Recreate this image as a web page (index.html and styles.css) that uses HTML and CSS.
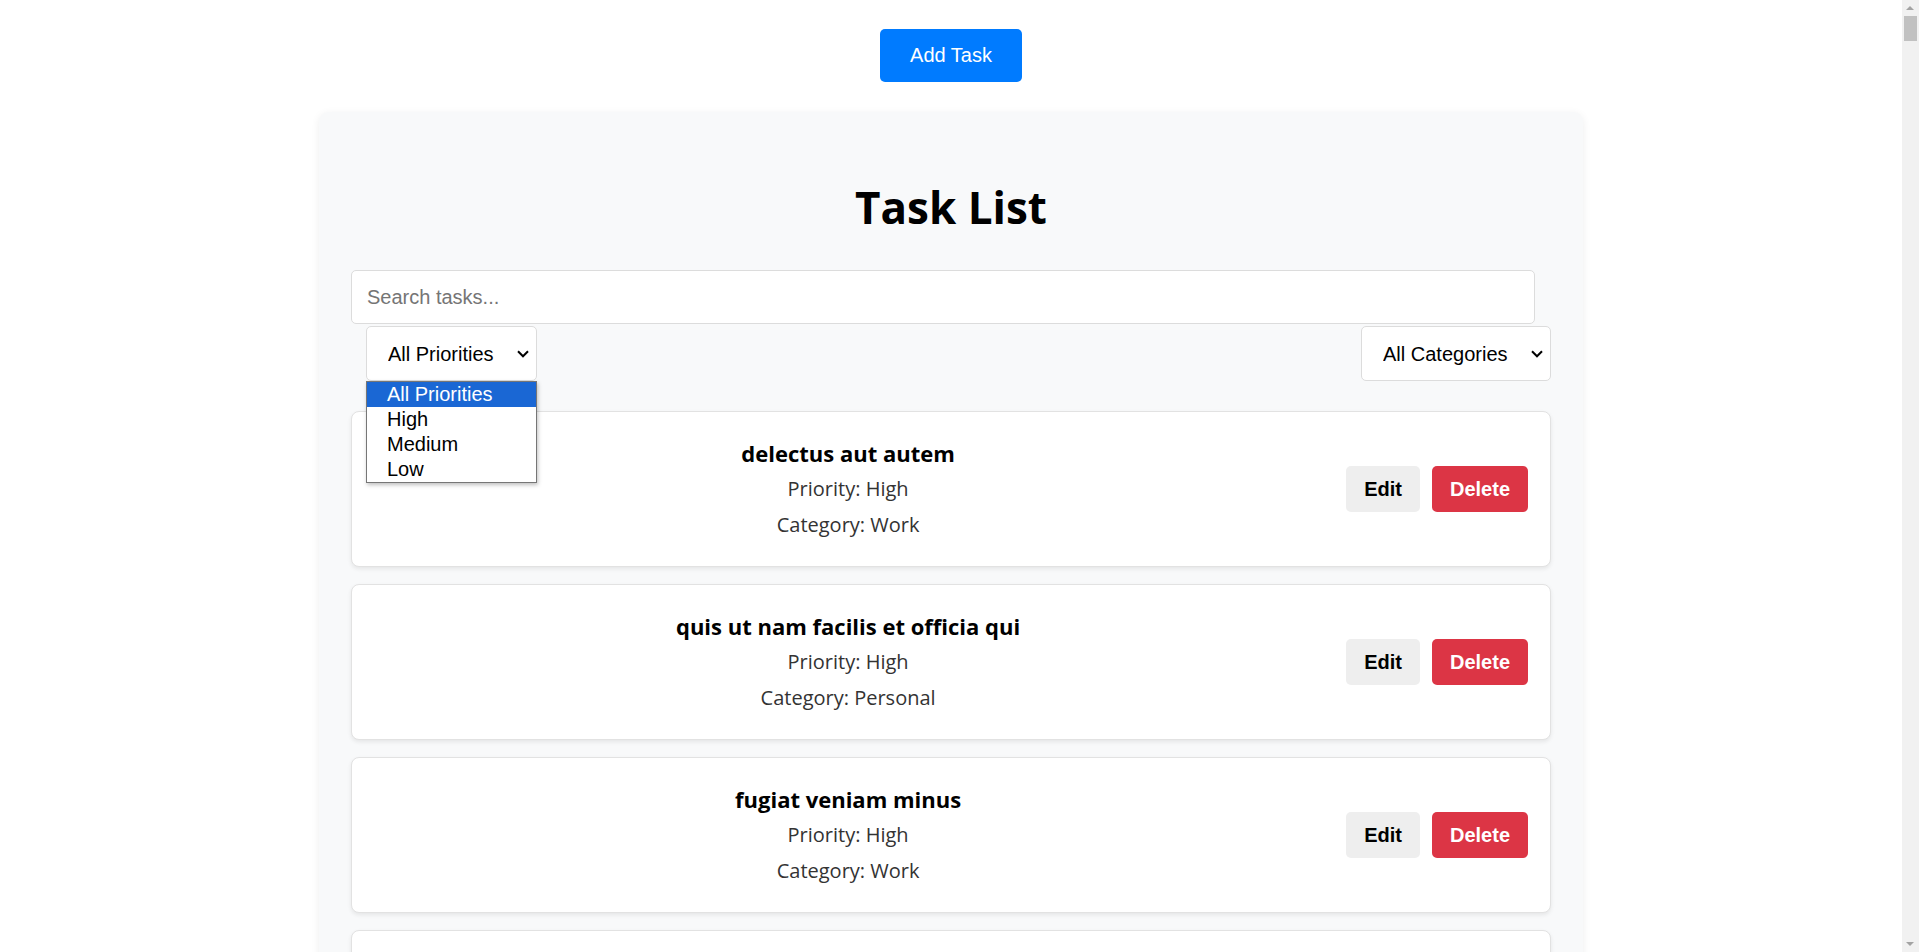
FILE: index.html
```html
<!DOCTYPE html>
<html lang="en">
<head>
<meta charset="utf-8">
<title>Task List</title>
<link rel="stylesheet" href="styles.css">
</head>
<body>
<div class="toolbar">
  <button class="btn-add" type="button">Add Task</button>
</div>
<main class="panel">
  <h1 class="title">Task List</h1>
  <input class="search" type="text" placeholder="Search tasks...">
  <div class="filters">
    <div class="select-wrap priority">
      <select class="filter-select">
        <option>All Priorities</option>
        <option>High</option>
        <option>Medium</option>
        <option>Low</option>
      </select>
      <svg class="chevron" width="12" height="8" viewBox="0 0 12 8"><path d="M1 1.3 L6 6.3 L11 1.3" fill="none" stroke="#000" stroke-width="2"/></svg>
      <ul class="dropdown">
        <li class="opt selected">All Priorities</li>
        <li class="opt">High</li>
        <li class="opt">Medium</li>
        <li class="opt">Low</li>
      </ul>
    </div>
    <div class="select-wrap">
      <select class="filter-select">
        <option>All Categories</option>
        <option>Work</option>
        <option>Personal</option>
      </select>
      <svg class="chevron" width="12" height="8" viewBox="0 0 12 8"><path d="M1 1.3 L6 6.3 L11 1.3" fill="none" stroke="#000" stroke-width="2"/></svg>
    </div>
  </div>
  <div class="tasks">
    <div class="task">
      <div class="task-info">
        <h3 class="task-title">delectus aut autem</h3>
        <p class="task-meta">Priority: High</p>
        <p class="task-meta">Category: Work</p>
      </div>
      <div class="task-actions">
        <button class="btn btn-edit" type="button">Edit</button>
        <button class="btn btn-delete" type="button">Delete</button>
      </div>
    </div>
    <div class="task">
      <div class="task-info">
        <h3 class="task-title">quis ut nam facilis et officia qui</h3>
        <p class="task-meta">Priority: High</p>
        <p class="task-meta">Category: Personal</p>
      </div>
      <div class="task-actions">
        <button class="btn btn-edit" type="button">Edit</button>
        <button class="btn btn-delete" type="button">Delete</button>
      </div>
    </div>
    <div class="task">
      <div class="task-info">
        <h3 class="task-title">fugiat veniam minus</h3>
        <p class="task-meta">Priority: High</p>
        <p class="task-meta">Category: Work</p>
      </div>
      <div class="task-actions">
        <button class="btn btn-edit" type="button">Edit</button>
        <button class="btn btn-delete" type="button">Delete</button>
      </div>
    </div>
    <div class="task">
      <div class="task-info">
        <h3 class="task-title">et porro tempora</h3>
        <p class="task-meta">Priority: High</p>
        <p class="task-meta">Category: Personal</p>
      </div>
      <div class="task-actions">
        <button class="btn btn-edit" type="button">Edit</button>
        <button class="btn btn-delete" type="button">Delete</button>
      </div>
    </div>
    <div class="task">
      <div class="task-info">
        <h3 class="task-title">laboriosam mollitia et enim quasi adipisci quia provident illum</h3>
        <p class="task-meta">Priority: High</p>
        <p class="task-meta">Category: Work</p>
      </div>
      <div class="task-actions">
        <button class="btn btn-edit" type="button">Edit</button>
        <button class="btn btn-delete" type="button">Delete</button>
      </div>
    </div>
  </div>
</main>
<div class="scrollbar" aria-hidden="true">
  <span class="sb-arrow sb-up"></span>
  <span class="sb-thumb"></span>
  <span class="sb-arrow sb-down"></span>
</div>
</body>
</html>
```

FILE: styles.css
```css
body {
  margin: 0 17px 0 0;
  background: #ffffff;
  font-family: "Open Sans", "Noto Sans", sans-serif;
  color: #000;
}

.toolbar {
  display: flex;
  justify-content: center;
  padding: 29px 0 30px;
}

.btn-add {
  font-family: "Liberation Sans", Arial, sans-serif;
  font-size: 20px;
  line-height: 23px;
  padding: 15px 30px;
  color: #fff;
  background: #007bff;
  border: none;
  border-radius: 5px;
}

.panel {
  width: 1200px;
  margin: 0 auto;
  padding: 32px 32px 40px;
  background: #f8f9fa;
  border-radius: 9px;
  box-shadow: 0 2px 8px rgba(0, 0, 0, 0.07);
}

.title {
  margin: 33px 0 33px;
  text-align: center;
  font-size: 44px;
  line-height: 60px;
  font-weight: 700;
}

.search {
  display: block;
  box-sizing: border-box;
  width: calc(100% - 16px);
  height: 54px;
  margin: 0;
  padding: 0 15px;
  font-family: "Liberation Sans", Arial, sans-serif;
  font-size: 20px;
  color: #000;
  background: #fff;
  border: 1px solid #dcdcdc;
  border-radius: 5px;
}

.search::placeholder {
  color: #757575;
}

.filters {
  display: flex;
  justify-content: space-between;
  margin-top: 2px;
}

.select-wrap {
  position: relative;
  display: flex;
}

.select-wrap.priority {
  margin-left: 15px;
}

.filter-select {
  appearance: none;
  -webkit-appearance: none;
  box-sizing: border-box;
  height: 55px;
  padding: 0 42px 0 21px;
  font-family: "Liberation Sans", Arial, sans-serif;
  font-size: 20px;
  color: #000;
  background: #fff;
  border: 1px solid #dcdcdc;
  border-radius: 5px;
}

.chevron {
  position: absolute;
  right: 8px;
  top: 24px;
  pointer-events: none;
}

.dropdown {
  position: absolute;
  top: 100%;
  left: 0;
  right: 0;
  margin: 0;
  padding: 0;
  list-style: none;
  background: #fff;
  border: 1px solid #767676;
  box-shadow: 1px 2px 4px rgba(0, 0, 0, 0.25);
  z-index: 5;
}

.opt {
  height: 25px;
  line-height: 25px;
  padding-left: 20px;
  font-family: "Liberation Sans", Arial, sans-serif;
  font-size: 20px;
  color: #000;
}

.opt.selected {
  background: #1a67d4;
  color: #fff;
}

.tasks {
  display: flex;
  flex-direction: column;
  gap: 17px;
  margin-top: 30px;
}

.task {
  display: flex;
  align-items: center;
  padding: 23px 22px;
  background: #fff;
  border: 1px solid #e2e2e2;
  border-radius: 8px;
  box-shadow: 0 2px 4px rgba(0, 0, 0, 0.08);
}

.task-info {
  flex: 1;
  margin-right: 24px;
  text-align: center;
}

.task-title {
  margin: 0;
  font-size: 22px;
  line-height: 36px;
  font-weight: 700;
  color: #000;
}

.task-meta {
  margin: 0;
  font-size: 20px;
  line-height: 36px;
  color: #333;
}

.task-actions {
  display: flex;
  gap: 12px;
}

.btn {
  font-family: "Liberation Sans", Arial, sans-serif;
  font-size: 20px;
  font-weight: 700;
  line-height: 22px;
  padding: 12px 18px;
  border: none;
  border-radius: 5px;
}

.btn-edit {
  background: #eeeeee;
  color: #000;
}

.btn-delete {
  background: #dc3545;
  color: #fff;
}

.scrollbar {
  position: fixed;
  top: 0;
  right: 0;
  bottom: 0;
  width: 17px;
  background: #f1f1f1;
  z-index: 10;
}

.sb-arrow {
  position: absolute;
  left: 4px;
  width: 0;
  height: 0;
  border-left: 4.5px solid transparent;
  border-right: 4.5px solid transparent;
}

.sb-up {
  top: 6px;
  border-bottom: 4.5px solid #a3a3a3;
}

.sb-down {
  bottom: 6px;
  border-top: 4.5px solid #a3a3a3;
}

.sb-thumb {
  position: absolute;
  top: 16px;
  left: 2px;
  width: 13px;
  height: 25px;
  background: #c1c1c1;
}
```
